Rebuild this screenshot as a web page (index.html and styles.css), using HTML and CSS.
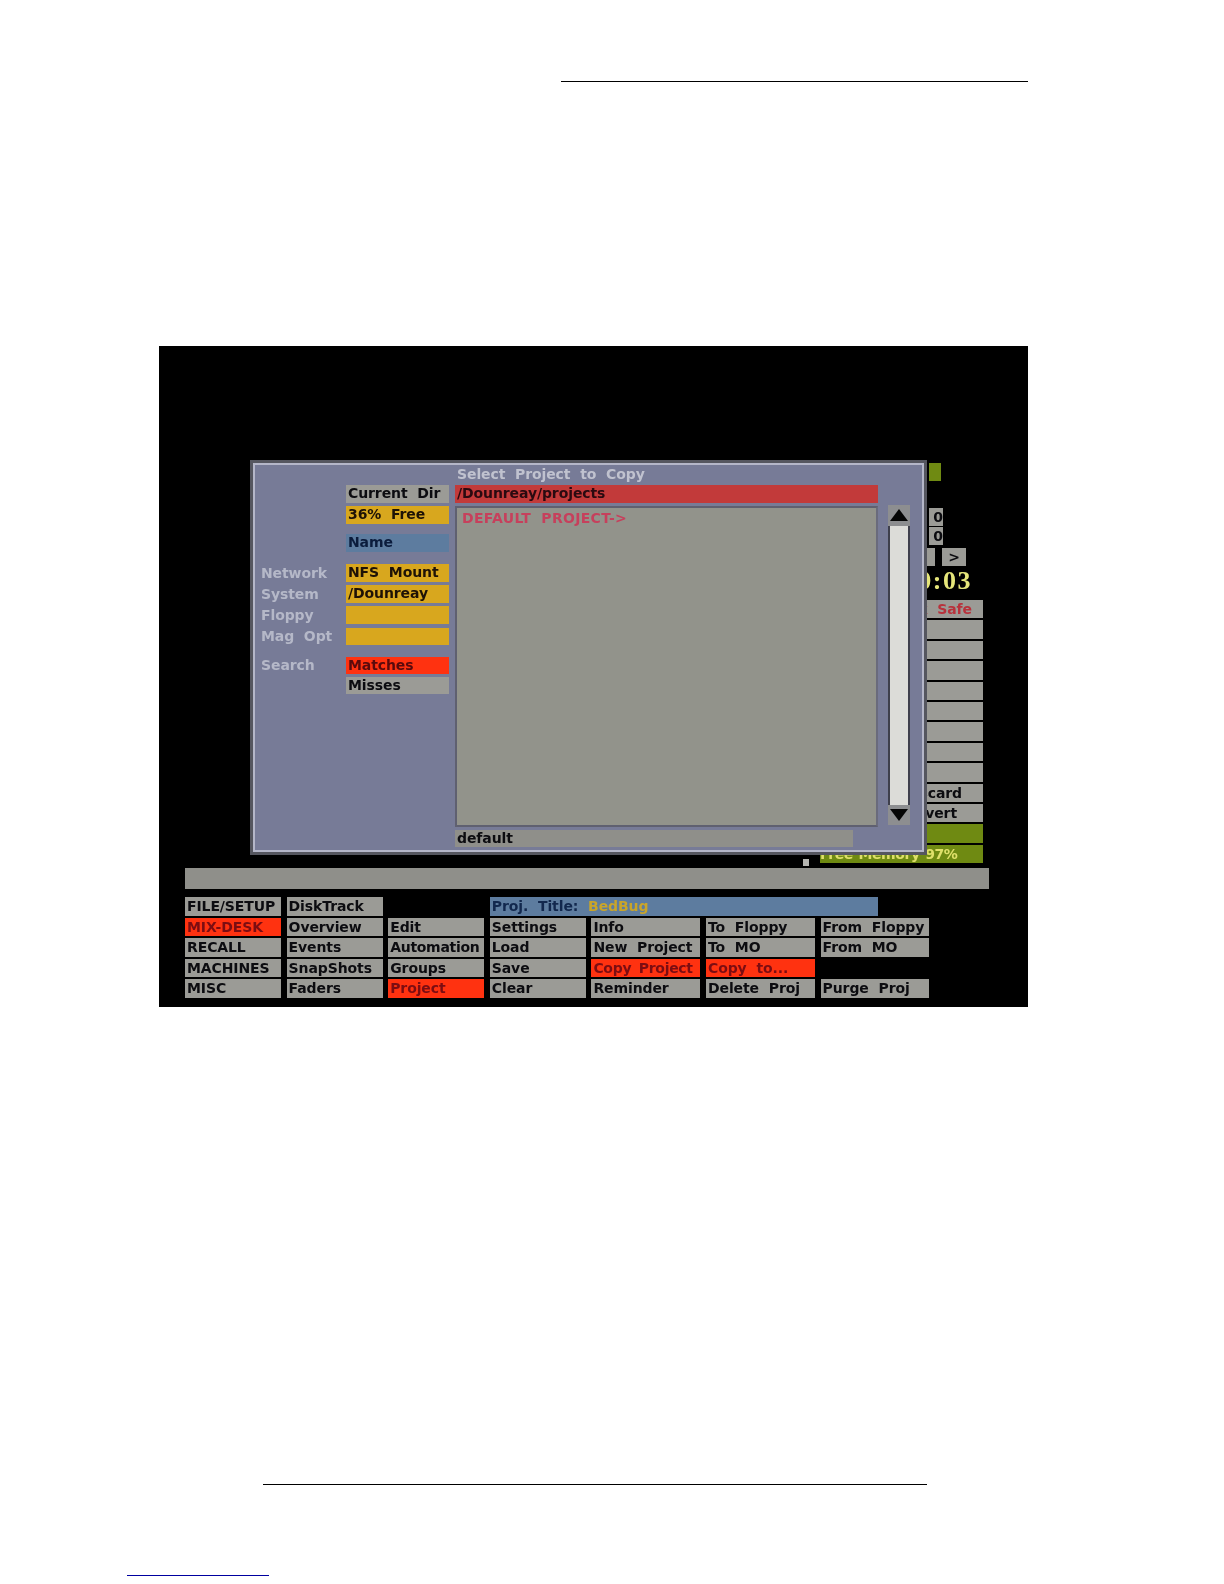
FILE: index.html
```html
<!DOCTYPE html>
<html lang="en">
<head>
    <meta charset="UTF-8">
    <meta name="viewport" content="width=device-width, initial-scale=1.0">
    <title>Select Project to Copy</title>
    <link rel="stylesheet" href="styles.css">
</head>
<body>
    <div class="page">
        <div class="top-rule"></div>

        <div class="screen">
            <!-- status column, mostly hidden behind the dialog -->
            <div class="side">
                <div class="level"></div>
                <div class="counter first">0</div>
                <div class="counter">0</div>
                <div class="nudge-row">
                    <div class="nudge-bar"></div>
                    <div class="nudge">&gt;</div>
                </div>
                <div class="clock">00:00:03</div>
                <div class="side-stack">
                    <div class="side-btn safe">Disk Safe</div>
                    <div class="side-btn"></div>
                    <div class="side-btn"></div>
                    <div class="side-btn"></div>
                    <div class="side-btn"></div>
                    <div class="side-btn"></div>
                    <div class="side-btn"></div>
                    <div class="side-btn"></div>
                    <div class="side-btn"></div>
                    <div class="side-btn discard">Discard</div>
                    <div class="side-btn revert">Revert</div>
                    <div class="side-btn green"></div>
                    <div class="side-btn green memory">Free Memory 97%</div>
                </div>
            </div>

            <div class="dot"></div>
            <div class="message-bar"></div>

            <div class="menu">
                <div class="btn">FILE/SETUP</div>
                <div class="btn">DiskTrack</div>
                <div class="gap"></div>
                <div class="btn title-bar">Proj. Title: <span class="title-name">BedBug</span></div>

                <div class="btn on">MIX-DESK</div>
                <div class="btn">Overview</div>
                <div class="btn">Edit</div>
                <div class="btn">Settings</div>
                <div class="btn">Info</div>
                <div class="btn">To Floppy</div>
                <div class="btn">From Floppy</div>

                <div class="btn">RECALL</div>
                <div class="btn">Events</div>
                <div class="btn tight">Automation</div>
                <div class="btn">Load</div>
                <div class="btn">New Project</div>
                <div class="btn">To MO</div>
                <div class="btn">From MO</div>

                <div class="btn">MACHINES</div>
                <div class="btn">SnapShots</div>
                <div class="btn">Groups</div>
                <div class="btn">Save</div>
                <div class="btn on tight">Copy Project</div>
                <div class="btn on">Copy to...</div>
                <div class="gap"></div>

                <div class="btn">MISC</div>
                <div class="btn">Faders</div>
                <div class="btn on">Project</div>
                <div class="btn">Clear</div>
                <div class="btn">Reminder</div>
                <div class="btn">Delete Proj</div>
                <div class="btn">Purge Proj</div>
            </div>

            <!-- copy dialog floats over the desk screen -->
            <div class="dialog">
                <div class="fields">
                    <div class="field-row row-dir"><div class="field gray">Current Dir</div></div>
                    <div class="field-row row-free"><div class="field amber">36% Free</div></div>
                    <div class="field-row row-name"><div class="field blue">Name</div></div>
                    <div class="field-row row-net"><span class="label">Network</span><div class="field amber">NFS Mount</div></div>
                    <div class="field-row row-sys"><span class="label">System</span><div class="field amber">/Dounreay</div></div>
                    <div class="field-row row-sys"><span class="label">Floppy</span><div class="field amber"></div></div>
                    <div class="field-row row-sys"><span class="label">Mag Opt</span><div class="field amber"></div></div>
                    <div class="field-row row-search"><span class="label">Search</span><div class="field red">Matches</div></div>
                    <div class="field-row row-miss"><div class="field gray">Misses</div></div>
                </div>

                <div class="browser">
                    <div class="dialog-title">Select Project to Copy</div>
                    <div class="path">/Dounreay/projects</div>
                    <div class="list">DEFAULT PROJECT-&gt;</div>
                    <div class="filename">default</div>
                </div>

                <div class="scroll">
                    <div class="arrow">
                        <svg width="20" height="14" viewBox="0 0 20 14"><polygon points="10,1 19,13 1,13" fill="#050505"/></svg>
                    </div>
                    <div class="track"></div>
                    <div class="arrow">
                        <svg width="20" height="14" viewBox="0 0 20 14"><polygon points="1,1 19,1 10,13" fill="#050505"/></svg>
                    </div>
                </div>
            </div>
        </div>

        <div class="bottom-rule"></div>
        <div class="link-rule"></div>
    </div>
</body>
</html>
```

FILE: styles.css
```css
body, html {
    margin: 0;
    padding: 0;
    background: #fff;
    font-family: "DejaVu Sans", sans-serif;
}

.page {
    display: flex;
    flex-direction: column;
    height: 1584px;
    overflow: hidden;
}

.top-rule {
    width: 467px;
    height: 1px;
    margin: 81px 0 0 561px;
    background: #000;
}

.screen {
    position: relative;
    display: flex;
    flex-direction: column;
    box-sizing: border-box;
    width: 869px;
    height: 661px;
    margin: 264px 0 0 159px;
    padding: 117px 39px 0 26px;
    background: #000;
    font-size: 14px;
    font-weight: bold;
    letter-spacing: -0.1px;
    word-spacing: 5px;
    color: #0c0c10;
    filter: blur(0.6px);
}

/* status column */
.side {
    display: flex;
    flex-direction: column;
    align-items: flex-end;
    width: 163px;
    margin-left: auto;
    margin-right: 6px;
}

.level {
    width: 12px;
    height: 18px;
    margin-right: 42px;
    background: #6f8a12;
}

.counter {
    width: 14px;
    height: 18px;
    margin: 1px 40px 0 0;
    text-align: right;
    line-height: 18px;
    background: #9b9b96;
}

.counter.first {
    margin-top: 27px;
}

.nudge-row {
    display: flex;
    gap: 7px;
    margin: 3px 17px 0 0;
}

.nudge-bar {
    width: 10px;
    height: 18px;
    background: #9b9b96;
}

.nudge {
    width: 24px;
    height: 18px;
    text-align: center;
    line-height: 18px;
    background: #9b9b96;
}

.clock {
    height: 25px;
    margin: 2px 11px 0 0;
    font-family: "Liberation Serif", serif;
    font-size: 26px;
    line-height: 25px;
    letter-spacing: 1.5px;
    color: #e6e67a;
}

.side-stack {
    display: flex;
    flex-direction: column;
    gap: 2px;
    width: 100%;
    margin-top: 7px;
}

.side-btn {
    box-sizing: border-box;
    height: 18.4px;
    padding-right: 8px;
    text-align: right;
    line-height: 18px;
    white-space: nowrap;
    background: #9b9b96;
}

.side-btn.safe {
    padding-right: 11px;
    color: #b8323c;
}

.side-btn.discard {
    padding-right: 21px;
}

.side-btn.revert {
    padding-right: 26px;
}

.side-btn.green {
    background: #6f8a12;
}

.side-btn.memory {
    padding-right: 31px;
    letter-spacing: -0.4px;
    word-spacing: 1px;
    color: #dfe06a;
}

.dot {
    width: 6px;
    height: 7px;
    margin: -4px 0 0 618px;
    background: #b5b5b0;
}

.message-bar {
    height: 21px;
    margin-top: 2px;
    background: #8f8f8a;
}

/* bottom menu */
.menu {
    display: grid;
    grid-template-columns: 96px 96px 96px 96px 109px 109px 108px;
    grid-auto-rows: 18.5px;
    column-gap: 5.6px;
    row-gap: 2.1px;
    margin-top: 8px;
}

.btn {
    padding-left: 2px;
    line-height: 18px;
    white-space: nowrap;
    overflow: hidden;
    background: #9b9b96;
}

.btn.on {
    color: #7c0d12;
    background: #ff3210;
}

.btn.tight {
    letter-spacing: -0.3px;
    word-spacing: 3px;
}

.title-bar {
    grid-column: span 4;
    width: 386px;
    color: #12284e;
    background: #5d7c9f;
}

.title-name {
    color: #c9a52a;
}

/* dialog */
.dialog {
    position: absolute;
    left: 91px;
    top: 114px;
    display: flex;
    box-sizing: border-box;
    width: 677px;
    height: 395px;
    padding: 13px 0 0 8px;
    background: #777b97;
    border: 3px solid #55565f;
    box-shadow: inset 0 0 0 2px #b4b6c8;
}

.fields {
    display: flex;
    flex-direction: column;
    width: 188px;
}

.field-row {
    display: flex;
    justify-content: flex-end;
    align-items: center;
    height: 17.5px;
    margin-top: 3.5px;
}

.row-dir {
    margin-top: 9px;
}

.row-name {
    margin-top: 11px;
}

.row-net {
    margin-top: 12px;
}

.row-sys {
    margin-top: 3.7px;
}

.row-search {
    margin-top: 11.5px;
}

.row-miss {
    margin-top: 2.5px;
}

.label {
    flex: 1;
    color: #b5b8c8;
    white-space: nowrap;
}

.field {
    box-sizing: border-box;
    width: 103px;
    height: 17.5px;
    padding-left: 2px;
    line-height: 17px;
    white-space: nowrap;
}

.field.gray {
    background: #9b9b96;
}

.field.amber {
    color: #1e1206;
    background: #d8a71e;
}

.field.blue {
    height: 18px;
    color: #0b1c3c;
    background: #5d7c9f;
}

.field.red {
    color: #5a0a0c;
    background: #ff3210;
}

.browser {
    display: flex;
    flex-direction: column;
    width: 423px;
    margin-left: 6px;
}

.dialog-title {
    height: 20px;
    margin: -11px 0 0 2px;
    line-height: 18px;
    color: #c0c2cf;
    white-space: nowrap;
}

.path {
    height: 18px;
    padding-left: 2px;
    line-height: 17px;
    color: #2a0a10;
    background: #c23a3a;
}

.list {
    box-sizing: border-box;
    height: 321px;
    margin-top: 3px;
    padding: 1px 0 0 5px;
    line-height: 18px;
    letter-spacing: 0.3px;
    color: #c6405c;
    background: #92938b;
    border: 2px solid #5f6070;
    border-right-color: #6a6b7c;
}

.filename {
    box-sizing: border-box;
    width: 398px;
    height: 17px;
    margin-top: 3px;
    padding-left: 2px;
    line-height: 16px;
    background: #8f8f8a;
}

.scroll {
    display: flex;
    flex-direction: column;
    width: 22px;
    margin: 29px 0 0 10px;
}

.arrow {
    display: flex;
    align-items: center;
    justify-content: center;
    height: 20.5px;
    background: #8d8e90;
}

.track {
    box-sizing: border-box;
    height: 279px;
    background: #dcdcd8;
    border-left: 2px solid #3e3f4c;
    border-right: 2px solid #3e3f4c;
}

.bottom-rule {
    width: 664px;
    height: 1px;
    margin: 477px 0 0 263px;
    background: #000;
}

.link-rule {
    width: 142px;
    height: 1px;
    margin: 90px 0 0 127px;
    background: #0000a0;
}
```
